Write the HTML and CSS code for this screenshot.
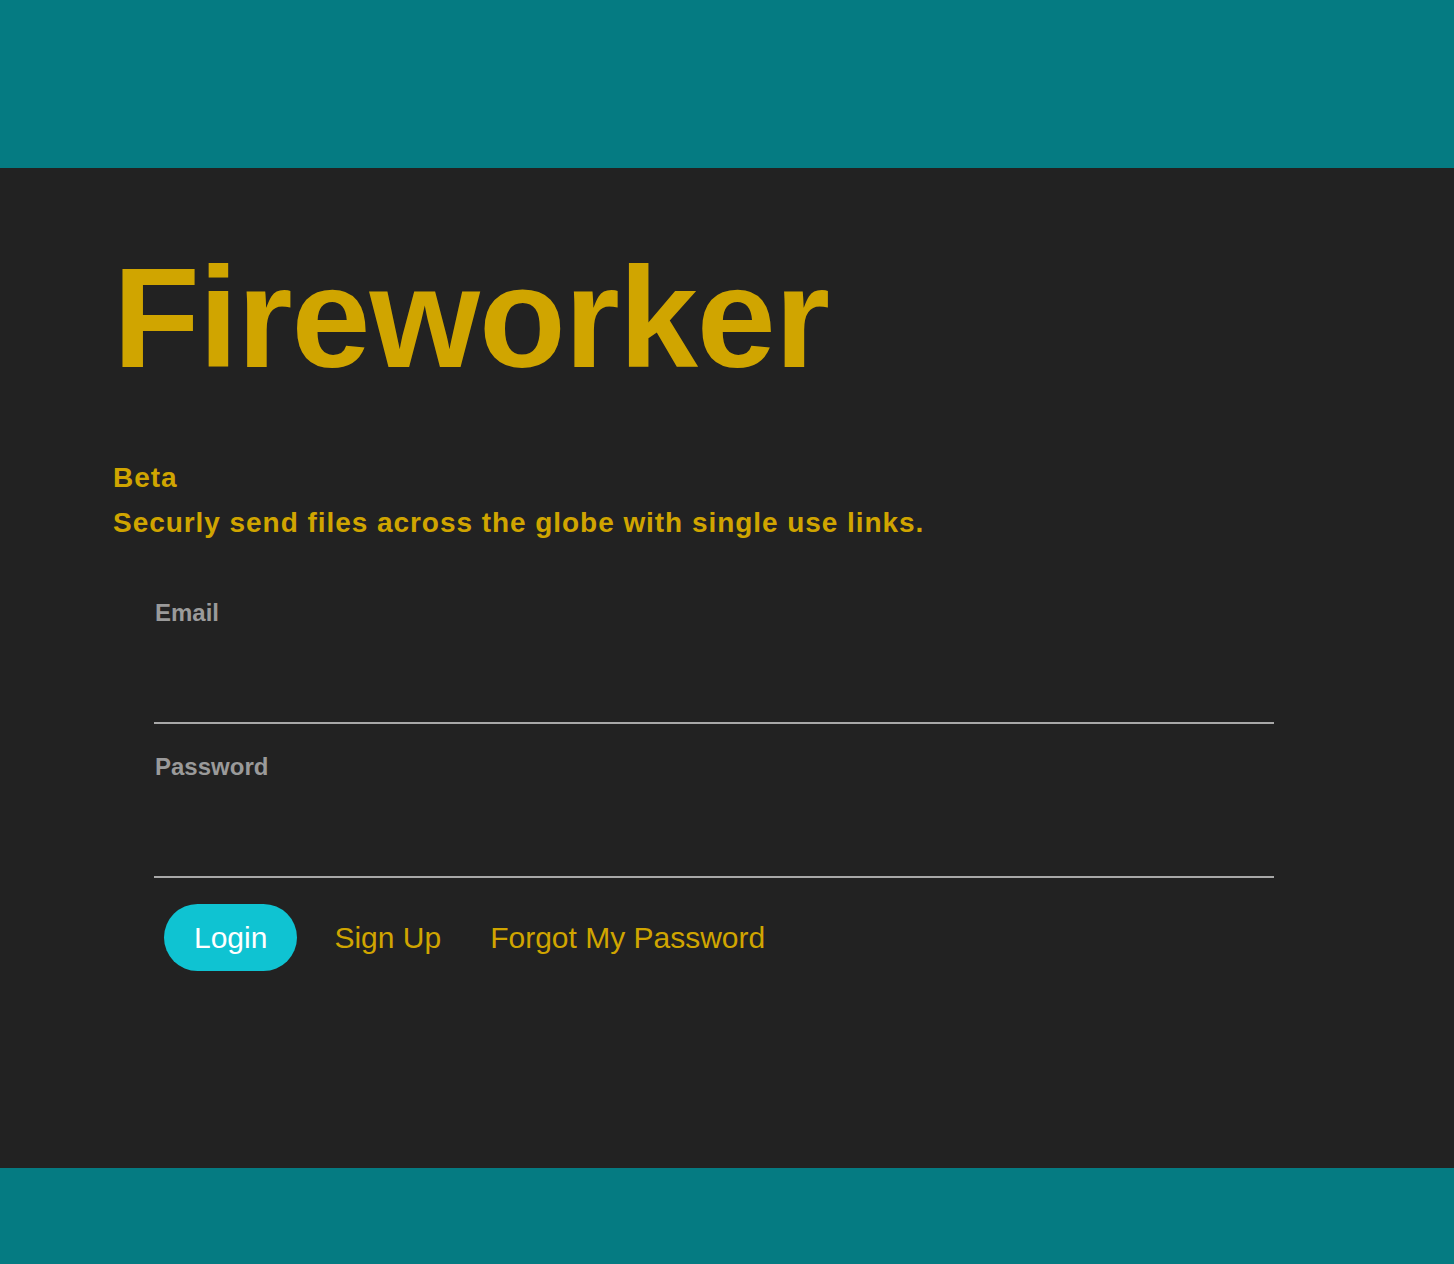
FILE: index.html
```html
<!DOCTYPE html>
<html lang="en">
<head>
<meta charset="utf-8">
<title>Fireworker</title>
<link rel="stylesheet" href="styles.css">
</head>
<body>
<header class="top-bar"></header>
<main class="main">
  <h1 class="title">Fireworker</h1>
  <p class="tag">Beta</p>
  <p class="tag">Securly send files across the globe with single use links.</p>
  <form class="form">
    <label class="field">
      <span class="label">Email</span>
      <input class="input" type="email">
    </label>
    <label class="field">
      <span class="label">Password</span>
      <input class="input" type="password">
    </label>
    <div class="actions">
      <button type="button" class="btn">Login</button>
      <a class="link link-signup" href="#">Sign Up</a>
      <a class="link" href="#">Forgot My Password</a>
    </div>
  </form>
</main>
<footer class="bottom-bar"></footer>
</body>
</html>
```
FILE: styles.css
```css
* { box-sizing: border-box; }
html, body { margin: 0; padding: 0; }
body {
  font-family: "Liberation Sans", Arial, Helvetica, sans-serif;
  background: #222222;
}
.top-bar {
  height: 168px;
  background: #057b82;
}
.bottom-bar {
  height: 96px;
  background: #057b82;
}
.main {
  height: 1000px;
  background: #222222;
  padding: 79px 0 0 113px;
}
.title {
  margin: 0;
  font-size: 142px;
  line-height: 142px;
  font-weight: 700;
  color: #d0a500;
  letter-spacing: -1px;
}
.title + .tag { margin-top: 66px; }
.tag {
  margin: 0;
  font-size: 28px;
  line-height: 45px;
  font-weight: 700;
  color: #d0a500;
  letter-spacing: 0.95px;
}
.form {
  width: 1120px;
  margin: 49px 0 0 41px;
  display: flex;
  flex-direction: column;
}
.field {
  display: flex;
  flex-direction: column;
  height: 154px;
}
.label {
  font-size: 24px;
  line-height: 38px;
  font-weight: 700;
  color: #9a9a9a;
  padding-left: 1px;
}
.input {
  height: 92px;
  background: transparent;
  border: 0;
  border-bottom: 2px solid #a8a8a8;
  outline: none;
  color: #ddd;
  font-size: 24px;
  font-family: inherit;
}
.actions {
  display: flex;
  align-items: center;
  margin-top: 2px;
  padding-left: 10px;
}
.btn {
  height: 67px;
  padding: 0 30px;
  border: 0;
  border-radius: 34px;
  background: #0fc3d2;
  color: #ffffff;
  font-family: inherit;
  font-size: 30px;
  font-weight: 400;
}
.link {
  color: #d0a500;
  font-size: 30px;
  text-decoration: none;
  margin-left: 49px;
}
.link-signup { margin-left: 37px; }
```
